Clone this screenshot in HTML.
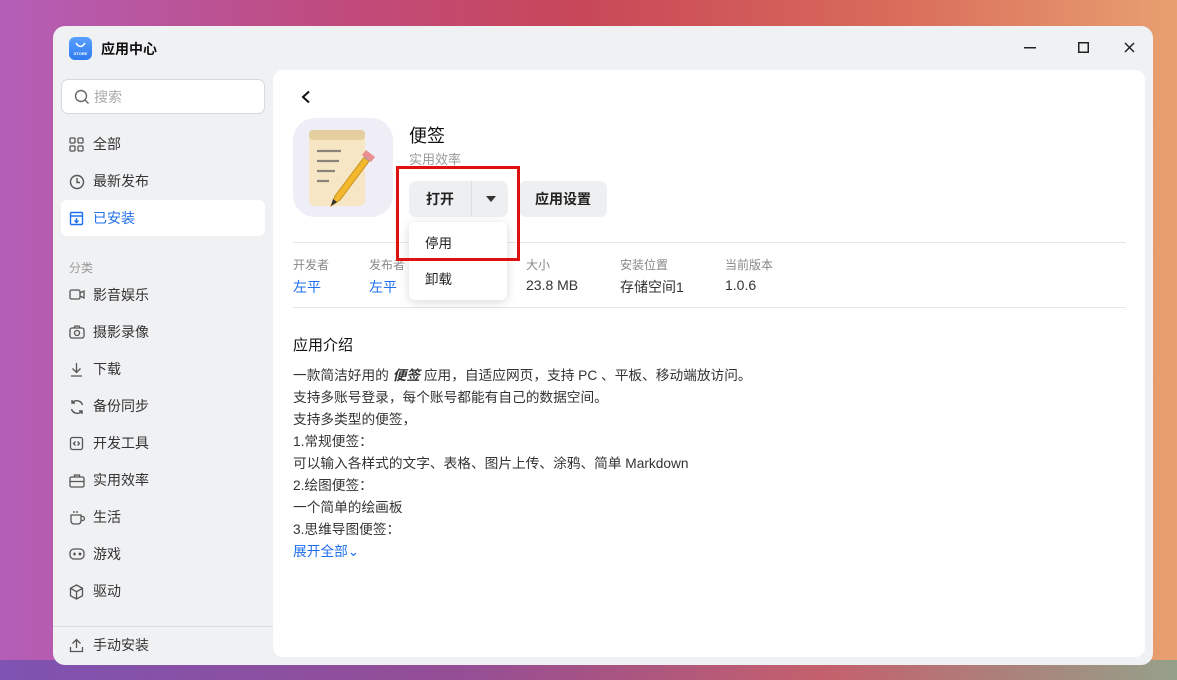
<!DOCTYPE html>
<html><head><meta charset="utf-8"><style>
*{margin:0;padding:0;box-sizing:border-box}
body{width:1177px;height:680px;overflow:hidden;position:relative;font-family:"Liberation Sans","Noto Sans CJK SC",sans-serif;
background:linear-gradient(90deg,#b45eb8 0%,#c04a7a 30%,#c84858 50%,#d86a5a 75%,#e8a070 100%);}
.bg2{position:absolute;left:0;right:0;bottom:0;height:20px;background:linear-gradient(90deg,#7050b0,#8a50a0 40%,#c06070 70%,#80a090 100%);opacity:.8}
.win{position:absolute;left:53px;top:26px;width:1100px;height:639px;background:#f0f1f3;border-radius:12px;overflow:hidden}
.title{position:absolute;left:16px;top:11px;display:flex;align-items:center;font-size:14px;font-weight:bold;color:#111}
.logo{width:23px;height:23px;border-radius:6px;background:linear-gradient(#5aa0ff,#2f7bf0);margin-right:9px;position:relative}
.ctl{position:absolute;top:14px;font-size:14px;color:#222}
.search{position:absolute;left:8px;top:53px;width:204px;height:35px;background:#fff;border:1px solid #d8d9dc;border-radius:7px;font-size:14px;color:#aaa;padding:7px 0 0 32px}
.nav{position:absolute;left:8px;width:204px;height:36px;border-radius:6px;font-size:14px;color:#333;padding:8px 0 0 32px}
.nav svg{position:absolute;left:8px;top:11px}
.nav.on{background:#fff;color:#1f6fee}
.cat{position:absolute;left:16px;top:233px;font-size:12px;color:#999}
.sep{position:absolute;left:0;top:600px;width:220px;border-top:1px solid #dcdde0}
.panel{position:absolute;left:220px;top:44px;width:872px;height:587px;background:#fff;border-radius:10px}
.abs{position:absolute}
.btn{position:absolute;background:#eeeff1;border-radius:7px;font-size:14px;font-weight:bold;color:#222}
.lbl{font-size:12px;color:#888}
.val{font-size:14px;color:#333;margin-top:4px}
.desc{position:absolute;left:20px;top:295px;font-size:13.7px;color:#333;line-height:22px}
</style></head><body>
<div class="bg2"></div>
<div class="win">
 <div class="title"><div class="logo"><svg width="23" height="23"><path d="M7 6 Q11.5 13 16 6" stroke="#fff" stroke-width="1.6" fill="none"/><text x="11.5" y="18" font-size="4" fill="#fff" text-anchor="middle">STORE</text></svg></div>应用中心</div>
 <svg class="ctl" style="left:971px;top:21px" width="12" height="2"><rect width="12" height="1.5" fill="#222"/></svg>
 <svg class="ctl" style="left:1025px;top:16px" width="11" height="11"><rect x=".75" y=".75" width="9.5" height="9.5" fill="none" stroke="#222" stroke-width="1.5"/></svg>
 <svg class="ctl" style="left:1071px;top:16px" width="11" height="11"><path d="M1 1L10 10M10 1L1 10" stroke="#222" stroke-width="1.5"/></svg>
 <div class="search"><svg style="position:absolute;left:12px;top:9px" width="16" height="16"><circle cx="7" cy="7" r="5.5" fill="none" stroke="#666" stroke-width="1.4"/><path d="M11 11L14.5 14.5" stroke="#666" stroke-width="1.4"/></svg>搜索</div>
 <div class="nav" style="top:100px"><svg width="15" height="15" fill="none" stroke="#555" stroke-width="1.3"><rect x="1" y="1" width="5" height="5" rx="1"/><rect x="9" y="1" width="5" height="5" rx="1"/><rect x="1" y="9" width="5" height="5" rx="1"/><rect x="9" y="9" width="5" height="5" rx="1"/></svg>全部</div>
 <div class="nav" style="top:137px"><svg width="16" height="16" fill="none" stroke="#555" stroke-width="1.4"><circle cx="8" cy="8" r="6.5"/><path d="M8 4v4.5h3"/></svg>最新发布</div>
 <div class="nav on" style="top:174px"><svg width="15" height="15" fill="none" stroke="#1f6fee" stroke-width="1.4"><rect x="1.5" y="1.5" width="12" height="12" rx="1"/><path d="M1.5 5h12M7.5 7v4M5.5 9.5l2 2 2-2"/></svg>已安装</div>
 <div class="cat">分类</div>
 <div class="nav" style="top:251px"><svg width="16" height="14" fill="none" stroke="#555" stroke-width="1.3"><rect x="1" y="2" width="10" height="9" rx="1.5"/><path d="M11 5l4-2v7l-4-2"/></svg>影音娱乐</div>
 <div class="nav" style="top:288px"><svg width="16" height="14" fill="none" stroke="#555" stroke-width="1.3"><rect x="1" y="3" width="14" height="10" rx="2"/><circle cx="8" cy="8" r="2.5"/><path d="M5 3l1-2h4l1 2"/></svg>摄影录像</div>
 <div class="nav" style="top:325px"><svg width="15" height="15" fill="none" stroke="#555" stroke-width="1.3"><path d="M7.5 1v9M3.5 6.5l4 4 4-4M2 14h11"/></svg>下载</div>
 <div class="nav" style="top:362px"><svg width="16" height="16" fill="none" stroke="#555" stroke-width="1.4"><path d="M13.5 6A6 6 0 0 0 3 4M2.5 10A6 6 0 0 0 13 12M3 1v3h3M13 15v-3h-3"/></svg>备份同步</div>
 <div class="nav" style="top:399px"><svg width="15" height="15" fill="none" stroke="#555" stroke-width="1.3"><rect x="1.5" y="1.5" width="12" height="12" rx="2"/><path d="M6.5 5.5l-2 2 2 2M8.5 5.5l2 2-2 2"/></svg>开发工具</div>
 <div class="nav" style="top:436px"><svg width="16" height="15" fill="none" stroke="#555" stroke-width="1.3"><rect x="1" y="4" width="14" height="10" rx="1.5"/><path d="M5.5 4V2h5v2M1 8.5h14"/></svg>实用效率</div>
 <div class="nav" style="top:473px"><svg width="16" height="16" fill="none" stroke="#555" stroke-width="1.3"><path d="M2 5h10v6a3 3 0 0 1-3 3H5a3 3 0 0 1-3-3zM12 6.5h1.5a2 2 0 0 1 0 4H12M5 1v2M8 1v2"/></svg>生活</div>
 <div class="nav" style="top:510px"><svg width="16" height="14" fill="none" stroke="#555" stroke-width="1.3"><rect x="1" y="2" width="14" height="10" rx="4"/><path d="M4 7h3M5.5 5.5v3"/><circle cx="11" cy="7" r=".8" fill="#555"/></svg>游戏</div>
 <div class="nav" style="top:547px"><svg width="15" height="16" fill="none" stroke="#555" stroke-width="1.3"><path d="M7.5 1l6 3.3v7.4l-6 3.3-6-3.3V4.3zM1.5 4.3l6 3.4 6-3.4M7.5 7.7V15"/></svg>驱动</div>
 <div class="sep"></div>
 <div class="nav" style="top:601px"><svg width="15" height="15" fill="none" stroke="#555" stroke-width="1.3"><path d="M7.5 10V1.5M3.5 5.5l4-4 4 4M1.5 9v4.5h12V9"/></svg>手动安装</div>

 <div class="panel">
  <svg class="abs" style="left:27px;top:20px" width="12" height="14"><path d="M9 1.5L3 7l6 5.5" fill="none" stroke="#111" stroke-width="2"/></svg>
  <div class="abs" style="left:20px;top:48px;width:100px;height:99px;border-radius:22px;background:#efedf6"></div>
  <svg class="abs" style="left:20px;top:48px" width="100" height="99">
   <rect x="16" y="12" width="56" height="76" rx="5" fill="#f6e6c4"/>
   <rect x="16" y="12" width="56" height="10" rx="4" fill="#e5cfa0"/>
   <g stroke="#8a8578" stroke-width="2.2"><path d="M24 33h24M24 43h22M24 53h18M24 63h12"/></g>
   <path d="M72 38l-30 40 -4 10 9-6 30-40z" fill="#f2b92e" stroke="#c8901a" stroke-width="1"/>
   <path d="M72 38l5 4" stroke="#999" stroke-width="4"/>
   <path d="M73 32l9 7-4 5-9-7z" fill="#e88f8f"/>
   <path d="M38 88l2-7 4 3z" fill="#333"/>
  </svg>
  <div class="abs" style="left:136px;top:52px;font-size:18px;color:#111">便签</div>
  <div class="abs" style="left:136px;top:79px;font-size:13px;color:#999">实用效率</div>
  <div class="btn" style="left:136px;top:111px;width:99px;height:36px"><span style="position:absolute;left:17px;top:8px">打开</span><div style="position:absolute;left:62px;top:0;width:1px;height:36px;background:#dcdde0"></div><svg style="position:absolute;left:77px;top:15px" width="10" height="6"><path d="M0 0h10L5 6z" fill="#333"/></svg></div>
  <div class="btn" style="left:246px;top:111px;width:88px;height:36px"><span style="position:absolute;left:16px;top:8px">应用设置</span></div>
  <div class="abs" style="left:20px;top:172px;width:833px;border-top:1px solid #e6e6e8"></div>
  <div class="abs" style="left:20px;top:237px;width:833px;border-top:1px solid #e6e6e8"></div>
  <div class="abs" style="left:20px;top:186px"><div class="lbl">开发者</div><div class="val" style="color:#1f6fee">左平</div></div>
  <div class="abs" style="left:96px;top:186px"><div class="lbl">发布者</div><div class="val" style="color:#1f6fee">左平</div></div>
  <div class="abs" style="left:253px;top:186px"><div class="lbl">大小</div><div class="val">23.8 MB</div></div>
  <div class="abs" style="left:347px;top:186px"><div class="lbl">安装位置</div><div class="val">存储空间1</div></div>
  <div class="abs" style="left:452px;top:186px"><div class="lbl">当前版本</div><div class="val">1.0.6</div></div>
  <div class="abs" style="left:136px;top:152px;width:98px;height:78px;background:#fff;border-radius:6px;box-shadow:0 2px 10px rgba(0,0,0,.15);font-size:13.5px;color:#222">
   <div style="position:absolute;left:16px;top:10px">停用</div><div style="position:absolute;left:16px;top:46px">卸载</div></div>
  <div class="abs" style="left:123px;top:96px;width:124px;height:95px;border:3px solid #e01010"></div>
  <div class="abs" style="left:20px;top:264px;font-size:15px;color:#111">应用介绍</div>
  <div class="desc">一款简洁好用的 <b><i>便签</i></b> 应用，自适应网页，支持 PC 、平板、移动端放访问。<br>支持多账号登录，每个账号都能有自己的数据空间。<br>支持多类型的便签，<br>1.常规便签：<br>可以输入各样式的文字、表格、图片上传、涂鸦、简单 Markdown<br>2.绘图便签：<br>一个简单的绘画板<br>3.思维导图便签：<br><span style="color:#1f6fee">展开全部⌄</span></div>
 </div>
</div>
</body></html>
